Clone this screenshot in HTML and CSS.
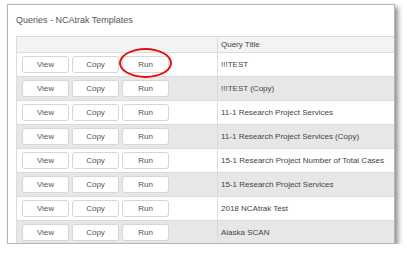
FILE: index.html
```html
<!DOCTYPE html>
<html lang="en">
<head>
    <meta charset="UTF-8">
    <title>Queries - NCAtrak Templates</title>
    <link rel="stylesheet" href="styles.css">
</head>
<body>
    <div class="panel">
        <h1>Queries - NCAtrak Templates</h1>

        <table class="queries">
            <thead>
                <tr>
                    <th class="actions"></th>
                    <th>Query Title</th>
                </tr>
            </thead>
            <tbody>
                <tr>
                    <td class="actions">
                        <div class="btn-group">
                            <button class="btn">View</button>
                            <button class="btn">Copy</button>
                            <button class="btn highlight">Run</button>
                        </div>
                    </td>
                    <td>!!!TEST</td>
                </tr>
                <tr>
                    <td class="actions"><div class="btn-group"><button class="btn">View</button><button class="btn">Copy</button><button class="btn">Run</button></div></td>
                    <td>!!!TEST (Copy)</td>
                </tr>
                <tr>
                    <td class="actions"><div class="btn-group"><button class="btn">View</button><button class="btn">Copy</button><button class="btn">Run</button></div></td>
                    <td>11-1 Research Project Services</td>
                </tr>
                <tr>
                    <td class="actions"><div class="btn-group"><button class="btn">View</button><button class="btn">Copy</button><button class="btn">Run</button></div></td>
                    <td>11-1 Research Project Services (Copy)</td>
                </tr>
                <tr>
                    <td class="actions"><div class="btn-group"><button class="btn">View</button><button class="btn">Copy</button><button class="btn">Run</button></div></td>
                    <td>15-1 Research Project Number of Total Cases</td>
                </tr>
                <tr>
                    <td class="actions"><div class="btn-group"><button class="btn">View</button><button class="btn">Copy</button><button class="btn">Run</button></div></td>
                    <td>15-1 Research Project Services</td>
                </tr>
                <tr>
                    <td class="actions"><div class="btn-group"><button class="btn">View</button><button class="btn">Copy</button><button class="btn">Run</button></div></td>
                    <td>2018 NCAtrak Test</td>
                </tr>
                <tr>
                    <td class="actions"><div class="btn-group"><button class="btn">View</button><button class="btn">Copy</button><button class="btn">Run</button></div></td>
                    <td>Alaska SCAN</td>
                </tr>
            </tbody>
        </table>
    </div>
</body>
</html>
```

FILE: styles.css
```css
body {
    margin: 0;
    background-color: #ffffff;
    font-family: 'Liberation Sans', Arial, sans-serif;
    color: #444;
}

.panel {
    margin: 4px 0 0 7px;
    width: 388px;
    height: 240px;
    border: 1px solid #b5b5b5;
    box-sizing: border-box;
    background-color: #ffffff;
    box-shadow: 3px 3px 5px rgba(0, 0, 0, 0.45);
    overflow: hidden;
}

h1 {
    margin: 0;
    padding: 10px 0 0 8px;
    height: 31px;
    box-sizing: border-box;
    font-size: 9px;
    font-weight: normal;
    color: #555;
}

.queries {
    margin-left: 8px;
    width: 420px;
    border-collapse: collapse;
    table-layout: fixed;
    font-size: 8px;
    color: #444;
}

.queries th,
.queries td {
    border: 1px solid #dcdcdc;
    padding: 0 0 0 3px;
    text-align: left;
    font-weight: normal;
}

.queries th {
    height: 15px;
    background-color: #f3f3f3;
}

.queries td {
    height: 23px;
}

.queries .actions {
    width: 195px;
    padding: 0 0 0 5px;
}

.queries tbody tr:nth-child(even) {
    background-color: #e7e7e7;
}

.btn-group {
    display: flex;
    gap: 3px;
}

.btn {
    width: 47px;
    height: 17px;
    padding: 0;
    border: 1px solid #d6d6d6;
    border-radius: 3px;
    background-color: #ffffff;
    font-family: inherit;
    font-size: 8px;
    color: #555;
}

.highlight {
    position: relative;
}

.highlight::after {
    content: '';
    position: absolute;
    left: -4px;
    top: -9px;
    width: 49px;
    height: 26px;
    border: 2px solid #e01010;
    border-radius: 50%;
}
```
